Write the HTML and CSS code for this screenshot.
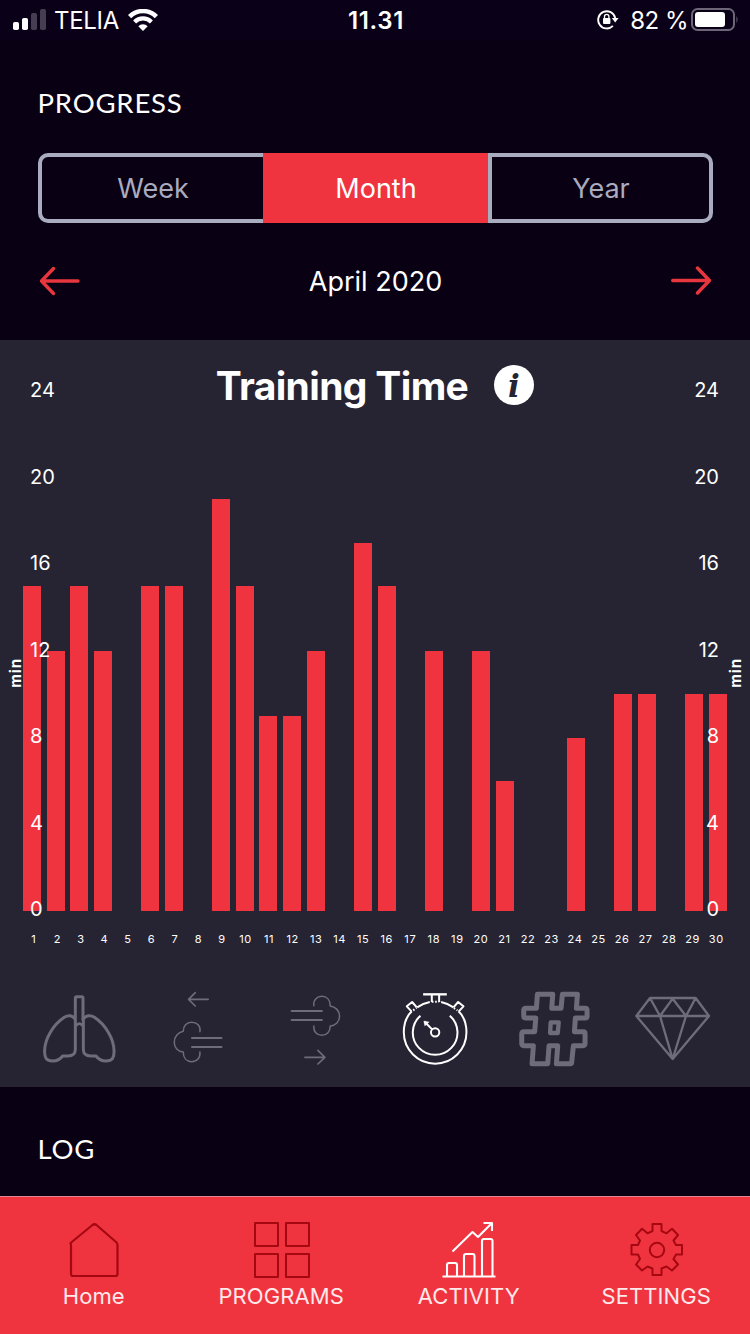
FILE: index.html
```html
<!DOCTYPE html>
<html lang="en">
<head>
<meta charset="utf-8">
<title>Progress</title>
<link rel="stylesheet" href="styles.css">
</head>
<body>
<div class="app">
  <header class="status">
    <div class="status-left">
      <svg class="signal" viewBox="0 0 33 22" width="33" height="22"><rect x="0" y="13" width="6" height="8" rx="1.8" fill="#fff"/><rect x="9" y="9" width="6" height="12" rx="1.8" fill="#fff"/><rect x="18" y="4" width="6" height="17" rx="1.8" fill="#453d52"/><rect x="27" y="0" width="6" height="21" rx="1.8" fill="#453d52"/></svg>
      <span class="carrier">TELIA</span>
      <svg class="wifi" viewBox="0 0 30 22" width="30" height="22" fill="none" stroke="#fff"><path d="M1.6 7.6a19 19 0 0 1 26.8 0" stroke-width="4.6"/><path d="M6.6 12.9a12 12 0 0 1 16.8 0" stroke-width="4.2"/><path d="M10.3 17.3a6.7 6.7 0 0 1 9.4 0L15 22z" fill="#fff" stroke="none"/></svg>
    </div>
    <div class="clock">11.31</div>
    <div class="status-right">
      <svg class="lock" viewBox="0 0 22 22" width="22" height="22"><path d="M15.9 16.9A8.6 8.6 0 1 1 18.2 9" fill="none" stroke="#fff" stroke-width="1.9"/><path d="M14.8 9h6.8l-3.4 4.6z" fill="#fff"/><rect x="6" y="9" width="7.4" height="6" rx="1" fill="#fff"/><path d="M7.5 9.5V7.6a2.2 2.2 0 0 1 4.4 0v1.9" fill="none" stroke="#fff" stroke-width="1.3"/></svg>
      <span class="charge">82 %</span>
      <svg class="battery" viewBox="0 0 48 24" width="48" height="24"><rect x="1" y="1" width="42" height="21" rx="5.5" fill="none" stroke="#6d6678" stroke-width="2"/><rect x="4" y="4" width="30" height="15" rx="3" fill="#fff"/><path d="M45.500 8q2 3.500 0 7z" fill="#6d6678"/></svg>
    </div>
  </header>

  <h2 class="heading">PROGRESS</h2>
  <div class="segments">
    <div class="segment first">Week</div>
    <div class="segment active">Month</div>
    <div class="segment last">Year</div>
  </div>
  <div class="period">
    <svg viewBox="0 0 42 30" width="42" height="30" class="arrow"><path d="M40 15H3.500M15.500 2.500L3.500 15L15.500 27.500"/></svg>
    <span class="period-name">April 2020</span>
    <svg viewBox="0 0 42 30" width="42" height="30" class="arrow"><path d="M1.700 14.500H38.500M26.500 2L38.500 14.500L26.500 27"/></svg>
  </div>

  <section class="panel">
    <div class="panel-title">
      <h1>Training Time</h1>
      <svg class="info" viewBox="0 0 40 40" width="40" height="40"><circle cx="20" cy="20" r="20" fill="#fff"/><text x="20" y="31.500" text-anchor="middle" class="info-letter">i</text></svg>
    </div>
    <div class="chart">
      <div class="bars">
        <i style="height:62.5%"></i><i style="height:50%"></i><i style="height:62.5%"></i><i style="height:50%"></i><i style="height:0"></i><i style="height:62.5%"></i><i style="height:62.5%"></i><i style="height:0"></i><i style="height:79.17%"></i><i style="height:62.5%"></i>
        <i style="height:37.5%"></i><i style="height:37.5%"></i><i style="height:50%"></i><i style="height:0"></i><i style="height:70.83%"></i><i style="height:62.5%"></i><i style="height:0"></i><i style="height:50%"></i><i style="height:0"></i><i style="height:50%"></i>
        <i style="height:25%"></i><i style="height:0"></i><i style="height:0"></i><i style="height:33.33%"></i><i style="height:0"></i><i style="height:41.67%"></i><i style="height:41.67%"></i><i style="height:0"></i><i style="height:41.67%"></i><i style="height:41.67%"></i>
      </div>
      <div class="axis axis-left"><span>24</span><span>20</span><span>16</span><span>12</span><span>8</span><span>4</span><span>0</span></div>
      <div class="axis axis-right"><span>24</span><span>20</span><span>16</span><span>12</span><span>8</span><span>4</span><span>0</span></div>
      <span class="unit unit-left">min</span>
      <span class="unit unit-right">min</span>
    </div>
    <div class="days">
      <span>1</span><span>2</span><span>3</span><span>4</span><span>5</span><span>6</span><span>7</span><span>8</span><span>9</span><span>10</span><span>11</span><span>12</span><span>13</span><span>14</span><span>15</span><span>16</span><span>17</span><span>18</span><span>19</span><span>20</span><span>21</span><span>22</span><span>23</span><span>24</span><span>25</span><span>26</span><span>27</span><span>28</span><span>29</span><span>30</span>
    </div>
    <div class="metrics">
      <svg class="metric" viewBox="59 0 356.250 300"><g stroke-width="9"><path d="M225 118V54q0-4 4-4h15q4 0 4 4v64M225 118C217 106 204 104 192 112C158 134 133 178 133 212C132 234 138 243 157 243C174 243 181 236 187 228H203C218 228 225 222 225 208V118"/><path d="M248 118C256 106 270 104 282 112C316 134 341 178 341 212C342 234 336 243 317 243C300 243 293 236 287 228H271C256 228 249 222 249 208V118"/><path d="M226 138Q237 124 248 138" stroke-width="8"/></g></svg>
      <svg class="metric" viewBox="59 0 356.250 300"><g transform="translate(-356.250 0)"><path d="M626 58H567M587 38L567 58L587 78" stroke-width="5"/><path d="M577 174H666M577 201H666" stroke-width="5.500"/><path d="M601 155C604 137 592 127 576 127C561 127 551 138 551 154C536 157 524 170 524 187C524 203 535 215 551 216C551 234 561 245 576 245C592 245 603 234 601 216" stroke-width="4.500"/></g></svg>
      <svg class="metric" viewBox="21.300 0 356.250 300"><path d="M165 232H224M204 211L225 232L204 252" stroke-width="5"/><path d="M125 93H216M125 120H216" stroke-width="5.500"/><path d="M192 77C189 61 201 49 216 49C231 49 241 60 241 78C257 80 269 93 269 108C269 125 257 137 241 138C241 155 231 166 216 166C201 166 190 155 192 138" stroke-width="4.500"/></svg>
      <svg class="metric selected" viewBox="377.600 0 356.250 300"><g transform="translate(377.600 0) translate(-377.600 0)" stroke-width="6"><path d="M519 43H590" stroke-width="7"/><path d="M545 45V66M567 45V66"/><path d="M545 65H567M489 91L499 84M611 84L622 91" stroke-dasharray="5 5"/><path d="M501 82Q518 70 539 66M573 66Q592 70 610 82M485 94C470 108 461 132 461 157A94 94 0 0 0 649 157C649 132 640 108 625 94"/><path d="M484 94L470 79L486 66L500 82M626 94L640 79L624 66L610 82"/><path d="M511 107A67 67 0 1 0 599 107"/><circle cx="555" cy="157" r="12.500"/><path d="M546 148L524 126"/><path d="M521 123L537 126L524 138Z" fill="#fff" stroke-width="1"/></g></svg>
      <svg class="metric" viewBox="-16.200 0 356.250 300"><g stroke-width="15"><path d="M111 43H157L154 85H182L186 43H231L228 85H254Q260 85 260 91V108Q260 114 254 114H225L222 155H249Q254 155 254 161V190Q254 197 248 197H219L214 245Q214 251 209 251H168L172 197H146L142 251H95L99 197H70Q64 197 64 190V162Q64 155 71 155H103L106 114H77Q70 114 70 107V91Q70 85 77 85H108Z"/><path d="M151 127H175L172 159H149Z" stroke-width="13"/></g></svg>
      <svg class="metric" viewBox="340 0 356.250 300"><g stroke-width="7"><path d="M451 54H588L628 108L519 237L410 108ZM410 108H628M451 54L481 108L519 56L559 108L588 54M481 108L519 237L559 108"/></g></svg>
    </div>
  </section>

  <h2 class="heading log">LOG</h2>

  <nav class="tabs">
    <div class="tab"><svg class="tab-icon" viewBox="-.5 0 60 60"><path d="M6 22L28 4Q30 2.500 32 4L51.500 21Q53 22.300 53 24V53Q53 55 51 55H8.500Q6.500 55 6.500 53V24Z" stroke-width="2.200"/></svg><span>Home</span></div>
    <div class="tab"><svg class="tab-icon" viewBox="-1 0 60 60"><path d="M3 2H26V25H3ZM34 2H57V25H34ZM3 33H26V56H3ZM34 33H57V56H34Z" stroke-width="2"/></svg><span>PROGRAMS</span></div>
    <div class="tab current"><svg class="tab-icon" viewBox="0 0 60 60"><path d="M3.500 55.500H56.500M8 55V44Q8 42 10 42H16Q18 42 18 44V55M25 55V35Q25 33 27 33H33.500Q35.500 33 35.500 35V55M43 55V20Q43 18 45 18H51.500Q53.500 18 53.500 20V55M13.500 30.500L33.500 11L39 16L52 3M44.500 2H53V10" stroke-width="2.100"/></svg><span>ACTIVITY</span></div>
    <div class="tab"><svg class="tab-icon" viewBox="-1 1 60 60"><path d="M25.500 4H34.500V11L39.500 13.300L45 8.700L51 15L46.500 20.500L49 25H55V34.500H49L46.500 39L51 44.500L45 50.500L39.500 46.500L34.500 48.500V55H25.500V48.500L20.500 46.500L15 50.500L9 44.500L13 39L11 34.500H4.500V25H11L13 20.500L9 15L15 8.700L20.500 13.300L25.500 11Z" stroke-width="2"/><circle cx="30" cy="30" r="7.200" stroke-width="2"/></svg><span>SETTINGS</span></div>
  </nav>
</div>
</body>
</html>
```
FILE: styles.css
```css
* { box-sizing: border-box; }
body { margin: 0; background: #090013; color: #fff; font-family: Inter, "Liberation Sans", sans-serif; }
svg { display: block; flex: none; }
h1, h2 { margin: 0; }
.app { width: 750px; height: 1334px; display: flex; flex-direction: column; overflow: hidden; }

.status { height: 40px; display: grid; grid-template-columns: 1fr auto 1fr; align-items: center; padding: 0 11px 0 13px; font-size: 24px; background: #0a0017; }
.status-left, .status-right { display: flex; align-items: center; }
.status-right { justify-content: flex-end; }
.carrier { margin: 1px 0 0 8px; letter-spacing: -.3px; }
.wifi { margin-left: 9px; }
.clock { font-weight: 600; font-size: 24px; letter-spacing: .6px; padding-top: 1px; }
.charge { margin: 1px 3px 0 11px; letter-spacing: -.5px; }

.heading { font: 400 27.500px/36px Lato, sans-serif; letter-spacing: .8px; margin: 45px 0 0 37.500px; }
.segments { margin: 32px 37px 0 38px; height: 70px; flex: none; display: grid; grid-template-columns: repeat(3, 1fr); font-size: 27px; }
.segment { display: flex; align-items: center; justify-content: center; padding-left: 1px; color: #a9abbf; border: 4px solid #a9abbf; }
.first { border-right: 0; border-radius: 10px 0 0 10px; }
.active { background: #f0343f; border-color: #f0343f; color: #fff; }
.last { border-radius: 0 10px 10px 0; }
.period { margin: 37px 37px 0 38px; height: 42px; display: flex; align-items: center; justify-content: space-between; font-size: 27px; }
.arrow { fill: none; stroke: #e8363f; stroke-width: 3.4; stroke-linecap: round; stroke-linejoin: round; }

.panel { margin-top: 38px; height: 747px; flex: none; background: #262433; }
.panel-title { height: 51px; display: flex; justify-content: center; align-items: flex-start; gap: 26px; }
h1 { font-size: 39px; line-height: 48px; font-weight: 700; letter-spacing: -.65px; margin-top: 22px; }
.info { margin-top: 25px; }
.info-letter { font: italic bold 31px "DejaVu Serif", serif; fill: #262433; }
.chart { position: relative; height: 520px; padding: 0 22.300px 0 23px; }
.bars { height: 100%; display: grid; grid-template-columns: repeat(30, 18px); justify-content: space-between; align-items: end; padding-right: .7px; }
.bars i { background: #f0343f; }
.axis { position: absolute; top: -14px; bottom: -12px; display: flex; flex-direction: column; justify-content: space-between; font-size: 20px; line-height: 26px; }
.axis-left { left: 30px; }
.axis-right { right: 31px; text-align: right; }
.unit { position: absolute; top: 267px; writing-mode: vertical-rl; transform: rotate(180deg); font-size: 15px; line-height: 18px; font-weight: 700; letter-spacing: .9px; }
.unit-left { left: 7px; }
.unit-right { right: 5px; }
.axis { bottom: -11px; }
.days { display: grid; grid-template-columns: repeat(30, 1fr); margin: 19px 22px 0 22px; height: 18px; line-height: 18px; font-size: 11px; text-align: center; letter-spacing: .6px; }
.metrics { display: grid; grid-template-columns: repeat(6, 118.750px); margin: 32px 0 0 19.600px; height: 100px; }
.metric { width: 118.750px; height: 100px; fill: none; stroke: #6e6b7b; stroke-linecap: round; stroke-linejoin: round; }
.metric.selected { stroke: #fff; stroke-linecap: butt; }

.log { margin-top: 44px; }
.tabs { margin-top: auto; height: 138px; flex: none; display: grid; grid-template-columns: repeat(4, 187.500px); border-top: 1px solid #e08791; background: #f0343f; }
.tab { display: flex; flex-direction: column; align-items: center; padding-top: 24px; font-size: 22px; line-height: 28px; letter-spacing: .1px; color: #ffe9ea; }
.tab-icon { width: 60px; height: 60px; margin-bottom: 1px; fill: none; stroke: #a60812; stroke-linejoin: round; }
.current .tab-icon { stroke: #fff; }
```
